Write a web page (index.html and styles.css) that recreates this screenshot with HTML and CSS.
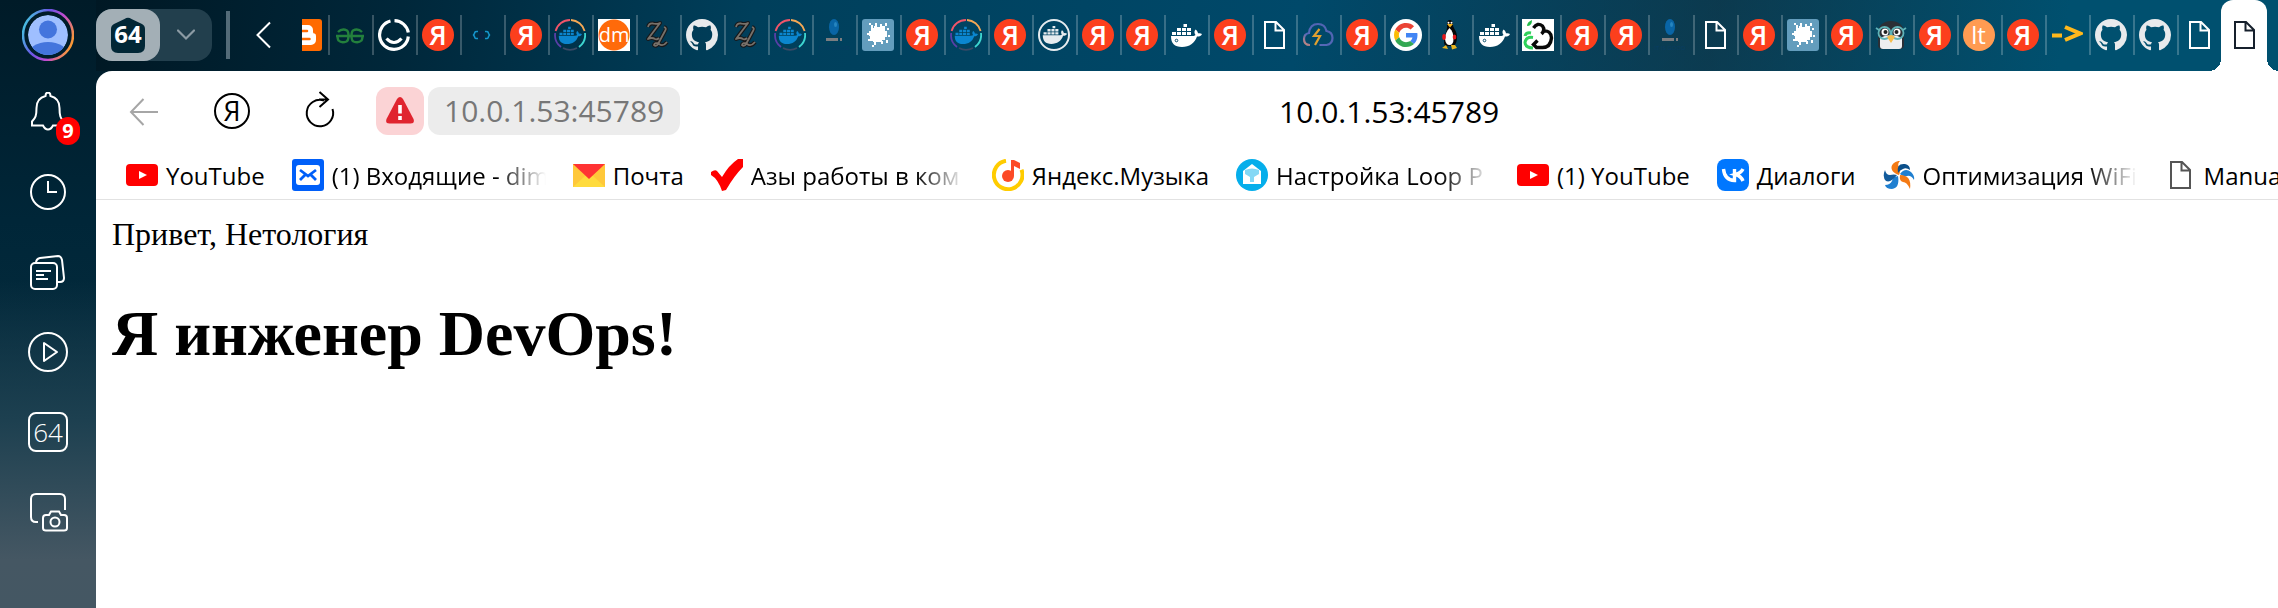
FILE: index.html
```
<!DOCTYPE html>
<html lang="ru">
<head>
<meta charset="utf-8">
<title>10.0.1.53:45789</title>
<link rel="stylesheet" href="styles.css">
</head>
<body>
<svg class="sprite" aria-hidden="true">
  <defs>
    <linearGradient id="ring" x1="0" y1="0.3" x2="1" y2="0.7"><stop offset="0" stop-color="#46c3e0"/><stop offset=".35" stop-color="#6a55e6"/><stop offset=".65" stop-color="#c24bd0"/><stop offset="1" stop-color="#ffa028"/></linearGradient>
    <linearGradient id="cloudline" x1="0" y1="1" x2="1" y2="0"><stop offset="0" stop-color="#d08a78"/><stop offset=".3" stop-color="#5568b8"/><stop offset="1" stop-color="#4f62b0"/></linearGradient>
    <clipPath id="face"><circle cx="26" cy="26" r="20"/></clipPath>
  </defs>
  <symbol id="doc" viewBox="0 0 32 32"><path d="M7 3h11l8 8v18H7z M17.500 3v8.500H26" fill="none" stroke="currentColor" stroke-width="2"/></symbol>
  <symbol id="github" viewBox="0 0 16 16"><path fill="#e8eaec" d="M8 0C3.580 0 0 3.580 0 8c0 3.540 2.290 6.530 5.470 7.590.4.070.55-.17.55-.38 0-.19-.01-.82-.01-1.490-2.010.37-2.530-.49-2.690-.94-.09-.23-.48-.94-.82-1.130-.28-.15-.68-.52-.01-.53.63-.01 1.080.58 1.230.82.72 1.210 1.870.87 2.330.66.070-.52.28-.87.51-1.070-1.780-.2-3.640-.89-3.640-3.950 0-.87.31-1.590.82-2.150-.08-.2-.36-1.020.08-2.120 0 0 .67-.21 2.200.82.64-.18 1.320-.27 2-.27.68 0 1.360.09 2 .27 1.530-1.040 2.200-.82 2.200-.82.44 1.100.16 1.920.08 2.120.51.56.82 1.270.82 2.150 0 3.070-1.870 3.750-3.650 3.950.29.25.54.73.54 1.480 0 1.070-.01 1.930-.01 2.200 0 .21.15.46.55.38A8.010 8.010 0 0 0 16 8c0-4.420-3.580-8-8-8z"/></symbol>
  <symbol id="whale" viewBox="0 0 32 32"><path fill="currentColor" d="M13.500 5H17v3h-3.500z M7 9h4v3H7z M12 9h4v3h-4z M17 9h4v3h-4z M2 13h4v3H2z M7 13h4v3H7z M12 13h4v3h-4z M17 13h4v3h-4z M1 17h21.500c1.500 0 2.500-.5 3-1-1.500-2-1.300-4 0-5.500 1.500 1 2.300 2.200 2.500 3.800 1.500-.3 3-.1 4 .6-.8 1.800-2.500 2.800-5 2.700C24.500 24.500 19.500 28 12 28 4.500 28 1 24.500 1 17z"/></symbol>
  <symbol id="docker-plain" viewBox="0 0 32 32"><use href="#whale" width="32" height="32"/><circle cx="6.500" cy="21.500" r="1.300" fill="none" stroke="#0b506e"/></symbol>
  <symbol id="docker-ring" viewBox="0 0 32 32"><g fill="none" stroke-width="1.800"><path d="M1.600 12A15 15 0 0 1 16 1" stroke="#f2556a"/><path d="M17 1a15 15 0 0 1 13.600 11" stroke="#f5a855"/><path d="M31 14a15 15 0 0 1-6 14" stroke="#3dd6d0"/><path d="M23 29a15 15 0 0 1-14 0" stroke="#3a4a66"/><path d="M7 28A15 15 0 0 1 1.200 14" stroke="#5a3fa8"/></g><use href="#whale" x="3" y="4" width="26" height="24" color="#0b86cf"/></symbol>
  <symbol id="docker-white" viewBox="0 0 32 32"><circle cx="16" cy="16" r="15" fill="none" stroke="#e6ecef" stroke-width="2"/><use href="#whale" x="3" y="3" width="27" height="25" color="#e6ecef"/></symbol>
  <symbol id="blogger" viewBox="0 0 32 32"><rect width="32" height="32" rx="3" fill="#ff6a00"/><path d="M6 11a5 5 0 0 1 5-5h7a5 5 0 0 1 5 5v2q0 1.500 1.500 1.500Q26 14.500 26 17v4a5 5 0 0 1-5 5H11a5 5 0 0 1-5-5z" fill="#fff"/><path d="M11.500 12h5.500M11.500 20h8" stroke="#ff6a00" stroke-width="2.500" stroke-linecap="round"/></symbol>
  <symbol id="gfg" viewBox="0 0 32 32"><path d="M2 17h28M4 13q4-4 9-1.500 1.500 1 1.500 5.500 0 4.500-2 5.500-5 2-8-1-1-1.500-1-4.500M28 13q-4-4-9-1.500-1.500 1-1.500 5.500 0 4.500 2 5.500 5 2 8-1 1-1.500 1-4.500" fill="none" stroke="#23803c" stroke-width="2.400"/></symbol>
  <symbol id="smile" viewBox="0 0 32 32"><g fill="none" stroke="#fff" stroke-width="3.200"><path d="M12.500 2A14.400 14.400 0 1 0 30.300 17.500M16.500 1.600A14.400 14.400 0 0 1 30.300 13.500"/><path d="M8.500 19.500q7.500 8 15 0"/></g></symbol>
  <symbol id="brackets" viewBox="0 0 32 32"><path d="M13 12h5v8h-5z" fill="#082546"/><path d="M12 12.500q-3.500-.5-3.500 2L7.500 16l1 1.500q0 2.500 3.500 2M19 12.500q3.500-.5 3.500 2l1 1.500-1 1.500q0 2.500-3.500 2" fill="none" stroke="#1595cc" stroke-width="1.500"/></symbol>
  <symbol id="zl" viewBox="0 0 32 32"><g fill="none" stroke-linejoin="round"><path id="zlp" d="M6 8q1-4 5-3.500 3 1 7-.5L6 20q4-2 7 0 2 1 4-1M22 8q3 1 1 4l-7 13q-2 3-4 1 1-3 5-1 4 3 8-2" stroke="#17191b" stroke-width="4"/><path d="M6 8q1-4 5-3.500 3 1 7-.5L6 20q4-2 7 0 2 1 4-1M22 8q3 1 1 4l-7 13q-2 3-4 1 1-3 5-1 4 3 8-2" stroke="#77716a" stroke-width="1.800"/></g></symbol>
  <symbol id="splat" viewBox="0 0 32 32"><rect width="32" height="32" rx="3" fill="#639dbd"/><path fill="#fff" d="M9 9h3V7h3v1h4V7h2v2h2v3h2v6h-2v3h-3v2h-9v-1H9v-2H8v-3H7v-5h2z"/><path fill="#fff" d="M7 4h2v2H7zM9 6h2v3H9zM13 4h2v3h-2zM18 5h2v3h-2zM23 4h2v3h-2zM21 7h2v2h-2zM25 9h2v2h-2zM26 16h2v2h-2zM24 21h2v3h-2zM19 22h2v3h-2zM12 23h2v3h-2zM10 26h2v2h-2zM6 20h3v2H6zM5 14h3v2H5z"/></symbol>
  <symbol id="cloud" viewBox="0 0 32 32"><path d="M8 26q-6 0-6-6 0-5 5-6 1-9 9-9 7 0 8.500 7 6 1 6 7t-6 7h-7" fill="none" stroke="url(#cloudline)" stroke-width="2.200"/><path d="M17.500 10L12 17h6l-5 9" fill="none" stroke="#e0a030" stroke-width="2.200"/></symbol>
  <symbol id="google" viewBox="-8 -8 64 64"><circle cx="24" cy="24" r="32" fill="#fff"/><path fill="#ea4335" d="M24 9.500c3.540 0 6.710 1.220 9.210 3.600l6.850-6.850C35.900 2.380 30.470 0 24 0 14.620 0 6.510 5.380 2.560 13.220l7.980 6.190C12.430 13.720 17.740 9.500 24 9.500z"/><path fill="#4285f4" d="M46.980 24.550c0-1.570-.15-3.090-.38-4.550H24v9.020h12.940c-.58 2.960-2.260 5.480-4.780 7.180l7.730 6c4.510-4.180 7.090-10.360 7.090-17.650z"/><path fill="#fbbc05" d="M10.530 28.590c-.48-1.450-.76-2.990-.76-4.590s.27-3.140.76-4.590l-7.980-6.190C.92 16.460 0 20.120 0 24c0 3.880.92 7.540 2.560 10.780l7.970-6.190z"/><path fill="#34a853" d="M24 48c6.480 0 11.930-2.130 15.890-5.810l-7.730-6c-2.150 1.450-4.920 2.300-8.160 2.300-6.260 0-11.570-4.220-13.470-9.910l-7.980 6.190C6.510 42.620 14.620 48 24 48z"/></symbol>
  <symbol id="tux" viewBox="0 0 32 32"><path d="M15.500 1c2.500 0 3.500 2 3.500 5 0 3 4 6 4 12 0 4-1 7-3 9h-8c-2-1-2-3-2-5 0-6 3-9 3-14 0-4 0-7 2.500-7z" fill="#080808"/><path d="M15.500 9c3 3 4 6 4 11 0 4-1.500 6-4 6s-4-2-4.500-6c0-5 2-8 4.500-11z" fill="#fff"/><path d="M13 5h6l-3 3.500z" fill="#f3b41b"/><circle cx="14.500" cy="3.800" r="1" fill="#fff"/><circle cx="17.500" cy="3.800" r="1" fill="#fff"/><ellipse cx="10" cy="18" rx="1.800" ry="3" fill="#e4161b"/><ellipse cx="20.500" cy="18" rx="1.800" ry="2.500" fill="#e4161b"/><path d="M8 29l4-3 2 4zM17 26h4l2 3-5 1.500z" fill="#eab51e"/></symbol>
  <symbol id="greencloud" viewBox="0 0 32 32"><path fill="#fff" d="M0 0h32v32H0z"/><path d="M5 7q0-4 5-6 0 6-5 6z" fill="#22bb4a"/><path d="M9 14q-5-1-6 3M11 18.500q-7-1-8 5 0 5 8 5.500" fill="none" stroke="#2fd15c" stroke-width="3"/><path d="M11.500 9q4-6 9-2 3 4-1 8M21 12q8-1 8.500 7-1 9.500-9 9.500h-6l-3-3 4-4" fill="none" stroke="#080808" stroke-width="3.400"/></symbol>
  <symbol id="penguin" viewBox="0 0 32 32"><path d="M3 14C3 6 9 2 16 2s13 4 13 12v12q0 4-4 4H7q-4 0-4-4z" fill="#2b2f36"/><path d="M5 19q5-3 11-3t11 3v8q0 3-3 3H8q-3 0-3-3z" fill="#eceef0"/><circle cx="10" cy="13" r="3.500" fill="#fff"/><circle cx="22" cy="13" r="3.500" fill="#fff"/><circle cx="10.500" cy="13" r="2" fill="#222"/><circle cx="21.500" cy="13" r="2" fill="#222"/><g fill="none" stroke="#5fb3b8" stroke-width="1.800"><circle cx="9.500" cy="14" r="6"/><circle cx="22.500" cy="14" r="6"/><path d="M1 9l3 2M31 9l-3 2M15 13h2"/></g><path d="M12 18q4-4 8 0l-4 6z" fill="#f6bd4c"/></symbol>
  <symbol id="arrow" viewBox="0 0 32 32"><path d="M1 16.500h10M14 8l15 6.500L14 21" fill="none" stroke="#ffb81c" stroke-width="4"/></symbol>
  <symbol id="youtube" viewBox="0 0 32 32"><rect y="5" width="32" height="22" rx="4" fill="#f00"/><path d="M13 12l8 4-8 4z" fill="#fff"/></symbol>
</svg>

<header class="topbar">
  <button class="avatar" aria-label="Профиль">
    <svg viewBox="0 0 52 52"><circle cx="26" cy="26" r="25" fill="none" stroke="url(#ring)" stroke-width="2.500"/><g clip-path="url(#face)"><circle cx="26" cy="26" r="20" fill="#9fbfff"/><circle cx="26" cy="20.500" r="9" fill="#4475dd"/><ellipse cx="26" cy="46" rx="20" ry="13" fill="#4475dd"/></g></svg>
  </button>
  <div class="group">
    <button class="group-count" aria-label="64 вкладки"><svg viewBox="0 0 34 36"><path d="M13.500 2q3.500-2.600 7 0L31 7q3 1.500 3 5v17q0 7-7 7H7q-7 0-7-7V12q0-3.500 3-5z" fill="#022736"/><text x="17" y="26" class="glyph-count">64</text></svg></button>
    <button class="group-menu" aria-label="Меню группы"><svg viewBox="0 0 18 12"><path d="M1 1.500l8 8 8-8" fill="none" stroke="#8c9ba4" stroke-width="2.200" stroke-linecap="round"/></svg></button>
  </div>
  <span class="bar"></span>
  <button class="scroll-left" aria-label="Назад по вкладкам"><svg viewBox="0 0 16 28"><path d="M14 1.500L1.500 14 14 26.500" fill="none" stroke="#fff" stroke-width="2"/></svg></button>
  <nav class="strip" aria-label="Вкладки">
    <div class="tabs">
      <button class="tab" aria-label="Blogger"><svg><use href="#blogger"/></svg></button>
      <button class="tab" aria-label="GeeksforGeeks"><svg><use href="#gfg"/></svg></button>
      <button class="tab" aria-label="Smile"><svg><use href="#smile"/></svg></button>
      <button class="tab" aria-label="Яндекс"><span class="fav ya">Я</span></button>
      <button class="tab" aria-label="Код"><svg><use href="#brackets"/></svg></button>
      <button class="tab" aria-label="Яндекс"><span class="fav ya">Я</span></button>
      <button class="tab" aria-label="Docker"><svg><use href="#docker-ring"/></svg></button>
      <button class="tab" aria-label="dm"><span class="fav dm">dm</span></button>
      <button class="tab" aria-label="ZL"><svg><use href="#zl"/></svg></button>
      <button class="tab" aria-label="GitHub"><svg><use href="#github"/></svg></button>
      <button class="tab" aria-label="ZL"><svg><use href="#zl"/></svg></button>
      <button class="tab" aria-label="Docker"><svg><use href="#docker-ring"/></svg></button>
      <button class="tab" aria-label="IT is good"><svg viewBox="0 0 32 32"><ellipse cx="16" cy="8" rx="5" ry="8" fill="#0965a6"/><ellipse cx="17.500" cy="5.500" rx="1.500" ry="2.500" fill="#2685c0"/><path d="M8 19h12v3H8zM22 19h2v3h-2z" fill="#7b7d80"/><text x="16" y="31" class="glyph-tiny">IT IS GOOD</text></svg></button>
      <button class="tab" aria-label="Splat"><svg><use href="#splat"/></svg></button>
      <button class="tab" aria-label="Яндекс"><span class="fav ya">Я</span></button>
      <button class="tab" aria-label="Docker"><svg><use href="#docker-ring"/></svg></button>
      <button class="tab" aria-label="Яндекс"><span class="fav ya">Я</span></button>
      <button class="tab" aria-label="Docker"><svg><use href="#docker-white"/></svg></button>
      <button class="tab" aria-label="Яндекс"><span class="fav ya">Я</span></button>
      <button class="tab" aria-label="Яндекс"><span class="fav ya">Я</span></button>
      <button class="tab" aria-label="Docker"><svg><use href="#docker-plain"/></svg></button>
      <button class="tab" aria-label="Яндекс"><span class="fav ya">Я</span></button>
      <button class="tab" aria-label="Страница"><svg><use href="#doc"/></svg></button>
      <button class="tab" aria-label="Cloud"><svg><use href="#cloud"/></svg></button>
      <button class="tab" aria-label="Яндекс"><span class="fav ya">Я</span></button>
      <button class="tab" aria-label="Google"><svg><use href="#google"/></svg></button>
      <button class="tab" aria-label="Linux"><svg><use href="#tux"/></svg></button>
      <button class="tab" aria-label="Docker"><svg><use href="#docker-plain"/></svg></button>
      <button class="tab" aria-label="Облако"><svg><use href="#greencloud"/></svg></button>
      <button class="tab" aria-label="Яндекс"><span class="fav ya">Я</span></button>
      <button class="tab" aria-label="Яндекс"><span class="fav ya">Я</span></button>
      <button class="tab" aria-label="IT is good"><svg viewBox="0 0 32 32"><ellipse cx="16" cy="8" rx="5" ry="8" fill="#0965a6"/><ellipse cx="17.500" cy="5.500" rx="1.500" ry="2.500" fill="#2685c0"/><path d="M8 19h12v3H8zM22 19h2v3h-2z" fill="#7b7d80"/><text x="16" y="31" class="glyph-tiny">IT IS GOOD</text></svg></button>
      <button class="tab" aria-label="Страница"><svg><use href="#doc"/></svg></button>
      <button class="tab" aria-label="Яндекс"><span class="fav ya">Я</span></button>
      <button class="tab" aria-label="Splat"><svg><use href="#splat"/></svg></button>
      <button class="tab" aria-label="Яндекс"><span class="fav ya">Я</span></button>
      <button class="tab" aria-label="Пингвин"><svg><use href="#penguin"/></svg></button>
      <button class="tab" aria-label="Яндекс"><span class="fav ya">Я</span></button>
      <button class="tab" aria-label="lt"><span class="fav lt">lt</span></button>
      <button class="tab" aria-label="Яндекс"><span class="fav ya">Я</span></button>
      <button class="tab" aria-label="Стрелка"><svg><use href="#arrow"/></svg></button>
      <button class="tab" aria-label="GitHub"><svg><use href="#github"/></svg></button>
      <button class="tab" aria-label="GitHub"><svg><use href="#github"/></svg></button>
      <button class="tab" aria-label="Страница"><svg><use href="#doc"/></svg></button>
    </div>
  </nav>
  <button class="tab-active" aria-label="10.0.1.53:45789"><svg><use href="#doc"/></svg></button>
</header>

<div class="main">
  <aside class="sidebar">
    <button class="side" aria-label="Уведомления, 9"><svg viewBox="0 0 40 40"><path d="M17.500 4q0-3.500 2.500-3.500T22.500 4c6 1.500 9 6 9 12 0 8 1 10 4 13.500v4H25q-2 4-5 4t-5-4H4v-4C7.500 26 8.500 24 8.500 16c0-6 3-10.500 9-12z"/></svg><span class="badge">9</span></button>
    <button class="side" aria-label="История"><svg viewBox="0 0 40 40"><circle cx="20" cy="20" r="17"/><path d="M20 9v11h9"/></svg></button>
    <button class="side" aria-label="Коллекции"><svg viewBox="0 0 40 40"><rect x="3" y="11" width="26" height="26" rx="4"/><path d="M8 11q0-4 4-5l18-2q3 0 4 4l2 18q0 4-4 4h-2M8 19h15M8 23h8M8 27h12"/></svg></button>
    <button class="side" aria-label="Видео"><svg viewBox="0 0 40 40"><circle cx="20" cy="20" r="19"/><path d="M16 11v18l13-9z" stroke-linejoin="round"/></svg></button>
    <button class="side" aria-label="64 вкладки"><svg viewBox="0 0 40 40"><rect x="1" y="1" width="38" height="38" rx="7"/><text x="20" y="30" class="glyph-side">64</text></svg></button>
    <button class="side" aria-label="Скриншот"><svg viewBox="0 0 40 40"><path d="M37 18V7q0-5-5-5H8Q3 2 3 7v18q0 5 5 5h2M15 26q0-3 3-3h3l2-3.500h8l2 3.500h3q3 0 3 3v10q0 2.500-3 2.500H18q-3 0-3-2.500z"/><circle cx="27" cy="30" r="4.500"/></svg></button>
  </aside>

  <div class="window">
    <div class="toolbar">
      <button class="tool" aria-label="Назад"><svg viewBox="0 0 40 40"><path d="M34 21H7M19.500 8L7 21l12.500 13" fill="none" stroke="#a6a6a6" stroke-width="2"/></svg></button>
      <button class="tool" aria-label="Яндекс"><svg viewBox="0 0 40 40"><circle cx="20" cy="20" r="17" fill="none" stroke="#000" stroke-width="2"/><text x="20" y="30" class="glyph-home">Я</text></svg></button>
      <button class="tool" aria-label="Обновить"><svg viewBox="0 0 40 40"><path d="M32.500 18A13.200 13.200 0 1 1 24 9.500M19 8.500h9M19.500 1l8.500 7.500-8.500 7.500" fill="none" stroke="#000" stroke-width="2"/></svg></button>
      <div class="address">
        <button class="warn" aria-label="Не защищено"><svg viewBox="0 0 30 30"><path d="M12 3q3-4 6 0l10.500 20q1.500 4.500-3 4.500h-21q-4.500 0-3-4.500z" fill="#e0242f"/><path d="M15 9v8.500M15 20v4" stroke="#fff" stroke-width="3.600"/></svg></button>
        <button class="url">10.0.1.53:45789</button>
      </div>
      <div class="title">10.0.1.53:45789</div>
    </div>
    <nav class="bookmarks" aria-label="Закладки">
      <a href="#"><svg><use href="#youtube"/></svg><span>YouTube</span></a>
      <a href="#"><svg viewBox="0 0 32 32"><rect width="32" height="32" rx="3" fill="#005ff9"/><rect x="4" y="6" width="24" height="20" rx="3" fill="#fff"/><path d="M8 11l8 6 8-6M8 21l5-5M24 21l-5-5" fill="none" stroke="#005ff9" stroke-width="2.800"/></svg><span class="long">(1) Входящие - dim</span></a>
      <a href="#"><svg viewBox="0 0 32 32"><path d="M0 5h32v23H0z" fill="#ffc83a"/><path d="M0 28l12-11h8l12 11z" fill="#ffdb3d"/><path d="M0 5h32L16 20z" fill="#ff3333"/></svg><span>Почта</span></a>
      <a href="#"><svg viewBox="0 0 32 32"><path d="M0 13q4-3 6-1l5 6Q18 6 27 0h5v8Q23 17 15 31l-4 1Q7 20 0 16z" fill="#f00"/></svg><span class="long">Азы работы в ком</span></a>
      <a href="#"><svg viewBox="0 0 32 32"><path d="M14 1.800a14.300 14.300 0 1 0 15.500 9" fill="none" stroke="#fc0" stroke-width="4"/><circle cx="16" cy="17" r="6" fill="#fc4a26"/><path d="M19 1h3l6 3v6l-6-3v10h-3z" fill="#fc4a26"/></svg><span>Яндекс.Музыка</span></a>
      <a href="#"><svg viewBox="0 0 32 32"><circle cx="16" cy="16" r="16" fill="#05aeeb"/><path d="M7 12l9-7 9 7v13H7z" fill="#fff"/><path d="M9 11q7-3 14 0v4l-5 3v5h-4v-5l-5-3z" fill="#84d8f5"/></svg><span class="long">Настройка Loop P</span></a>
      <a href="#"><svg><use href="#youtube"/></svg><span>(1) YouTube</span></a>
      <a href="#"><svg viewBox="0 0 32 32"><rect width="32" height="32" rx="8" fill="#07f"/><path d="M6.500 10q1 11 11 11.500V10M26 10q-2 4-7.500 5.500Q24 17 26 22" fill="none" stroke="#fff" stroke-width="3.400"/></svg><span>Диалоги</span></a>
      <a href="#"><svg viewBox="0 0 32 32"><path d="M16 16C4 12 8 2 17 2q-3 3-1 6 2 4 0 8z" fill="#f47a14"/><path d="M15 14q-2-10 7-9 5 1 5 6-4-3-7-1-3 1-5 4z" fill="#0b4f8a"/><path d="M17 15q5-7 11-2 4 4 3 8-3-5-7-4-4 1-7-2z" fill="#1f7fd0"/><path d="M17 16q12 0 10 14-3-7-7-7-4-1-3-7z" fill="#f47a14"/><path d="M15 17q2 12-6 13-6 0-7-4 5 0 7-4 1-4 6-5z" fill="#1f7fd0"/><path d="M14 16Q8 24 3 22q-4-4-1-11 1 5 5 5 4-1 7 0z" fill="#125b9c"/></svg><span class="long">Оптимизация WiFi</span></a>
      <a href="#"><svg class="grey"><use href="#doc"/></svg><span>Manual</span></a>
    </nav>
    <main class="page">
      <p>Привет, Нетология</p>
      <h1>Я инженер DevOps!</h1>
    </main>
  </div>
</div>
</body>
</html>
```
FILE: styles.css
```
* { box-sizing: border-box; }

body {
  margin: 0;
  min-height: 100vh;
  display: flex;
  flex-direction: column;
  overflow: hidden;
  font-family: "Open Sans", "Noto Sans", sans-serif;
  background:
    linear-gradient(180deg, transparent 0, transparent 280px, #1d4050 420px, #455763 560px, #445763 608px) 0 0 / 96px 100% no-repeat,
    linear-gradient(100deg, #001824 0, #00273a 14%, #003f5b 30%, #00496a 55%, #17587480 74%, #00506f 90%, #00506f 100%) 96px 0 / calc(100% - 96px) 71px no-repeat,
    linear-gradient(180deg, #001b28 0, #002638 220px, #0b3344 100%);
}

button {
  margin: 0;
  padding: 0;
  border: 0;
  background: none;
  color: inherit;
  font: inherit;
}

svg { display: block; }

.sprite {
  position: absolute;
  width: 0;
  height: 0;
}

/* top bar */
.topbar {
  display: flex;
  align-items: center;
  height: 71px;
  padding-bottom: 1px;
  color: #fff;
}

.avatar {
  flex: none;
  width: 96px;
  display: grid;
  place-items: center;
}
.avatar svg { width: 52px; height: 52px; }

.group {
  flex: none;
  display: flex;
  width: 116px;
  height: 52px;
  border-radius: 16px;
  background: #223f4d;
}
.group-count, .group-menu { display: grid; place-items: center; }
.group-count {
  width: 64px;
  border-radius: 16px;
  background: #a3afb6;
}
.group-count svg { width: 34px; height: 36px; }
.group-menu { flex: 1; }
.group-menu svg { width: 18px; height: 12px; }

.bar {
  flex: none;
  width: 4px;
  height: 48px;
  margin: 0 26px 0 14px;
  background: #536b78;
}
.scroll-left { flex: none; }
.scroll-left svg { width: 16px; height: 28px; }

.strip {
  flex: 1;
  min-width: 0;
  margin-left: 30px;
  overflow: hidden;
}
.tabs {
  display: flex;
  margin-left: -18px;
}
.tab {
  flex: 1 0 44px;
  height: 40px;
  padding-left: 4px;
  border-left: 2px solid #ffffff38;
  display: flex;
  align-items: center;
}
.tab svg { width: 32px; height: 32px; color: #fff; }

.fav {
  width: 32px;
  height: 32px;
  color: #fff;
  line-height: 32px;
  text-align: center;
}
.ya {
  border-radius: 50%;
  background: #fc3f1d;
  font-size: 27px;
  font-weight: 600;
}
.dm {
  background: radial-gradient(circle, #ff6a0a 15px, #fff 16px);
  font-size: 20px;
}
.lt {
  border-radius: 50%;
  background: #ff9b52;
  font-size: 24px;
}

.tab-active {
  position: relative;
  flex: none;
  width: 46px;
  height: 71px;
  margin-right: 11px;
  border-radius: 12px 12px 0 0;
  background: #fff;
  color: #16202c;
  display: grid;
  place-items: center;
}
.tab-active svg { width: 32px; height: 32px; }
.tab-active::before, .tab-active::after {
  content: "";
  position: absolute;
  bottom: 0;
  width: 12px;
  height: 12px;
}
.tab-active::before { right: 100%; background: radial-gradient(circle at 0 0, transparent 12px, #fff 12px); }
.tab-active::after { left: 100%; background: radial-gradient(circle at 100% 0, transparent 12px, #fff 12px); }

/* side bar */
.main { flex: 1; display: flex; min-width: 0; }
.sidebar {
  flex: none;
  width: 96px;
  padding-top: 1px;
  display: flex;
  flex-direction: column;
}
.side {
  position: relative;
  height: 80px;
  display: grid;
  place-items: center;
  color: #fff;
}
.side svg {
  width: 40px;
  height: 40px;
  fill: none;
  stroke: #fff;
  stroke-width: 2;
}
.badge {
  position: absolute;
  left: 56px;
  top: 45px;
  width: 24px;
  height: 28px;
  border-radius: 12px;
  background: #f00;
  font-size: 20px;
  font-weight: 700;
  line-height: 28px;
  text-align: center;
}

/* browser window */
.window {
  flex: 1;
  min-width: 0;
  border-radius: 16px 0 0 0;
  background: #fff;
  overflow: hidden;
}
.toolbar {
  display: flex;
  align-items: center;
  height: 80px;
  padding: 0 180px 0 28px;
  font-size: 30px;
}
.tool {
  flex: none;
  width: 40px;
  margin-right: 48px;
}
.tool svg { width: 40px; height: 40px; }
.address { flex: none; display: flex; gap: 4px; margin-left: -12px; }
.warn {
  width: 48px;
  height: 48px;
  border-radius: 12px;
  background: #fbd3d5;
  display: grid;
  place-items: center;
}
.warn svg { width: 30px; height: 30px; }
.url {
  height: 48px;
  padding: 0 16px;
  border-radius: 12px;
  background: #ececec;
  color: #777;
  line-height: 48px;
}
.title { flex: 1; text-align: center; }

.bookmarks {
  display: flex;
  gap: 27px;
  height: 49px;
  padding-left: 30px;
  border-bottom: 1px solid #e2e2e2;
  font-size: 24px;
}
.bookmarks a {
  flex: none;
  display: flex;
  align-items: center;
  gap: 8px;
  color: #000;
  text-decoration: none;
  white-space: nowrap;
}
.bookmarks svg { width: 32px; height: 32px; }
.bookmarks .grey { color: #555; }
.long {
  width: 214px;
  overflow: hidden;
  -webkit-mask-image: linear-gradient(90deg, #000 164px, transparent 214px);
  mask-image: linear-gradient(90deg, #000 164px, transparent 214px);
}

/* page */
.page {
  padding: 16px;
  font-family: "Liberation Serif", serif;
  font-size: 32px;
}
.page p { margin: 0; }
.page h1 { margin: 44px 0 0; font-size: 64px; }

/* lettering inside icons */
.glyph-count, .glyph-home, .glyph-side, .glyph-tiny {
  text-anchor: middle;
  font-family: "Open Sans", sans-serif;
}
.glyph-count { font-size: 24px; font-weight: 700; fill: #fff; }
.glyph-home { font-size: 27px; fill: #000; }
.glyph-side { font-size: 26px; font-weight: 300; fill: #fff; stroke: none; }
.glyph-tiny { font-size: 6px; fill: #083c63; stroke: none; }
```
